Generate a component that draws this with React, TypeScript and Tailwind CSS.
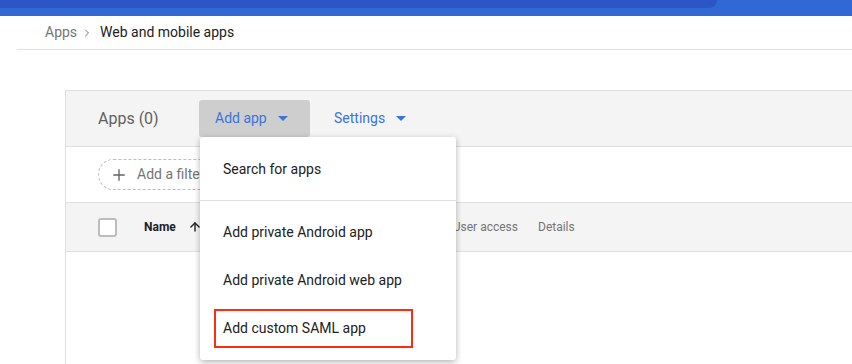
import { Plus, ChevronRight, ArrowUp } from "lucide-react";

const MENU_ITEMS = ["Add private Android app", "Add private Android web app"];

function Caret() {
  return (
    <svg width="10" height="5" viewBox="0 0 10 5" className="ml-[11px]">
      <path d="M0 0h10L5 5z" fill="#3b74db" />
    </svg>
  );
}

export default function App() {
  return (
    <div className="h-[364px] w-[852px] overflow-hidden bg-white font-['Roboto',sans-serif]">
      {/* top bar */}
      <div className="h-4 bg-[#3268d6]">
        <div className="h-2 w-[717px] rounded-br-lg bg-[#2b57c6]" />
      </div>

      {/* breadcrumb */}
      <div className="ml-[17px] flex h-[34px] items-center border-b border-[#e0e0e0] pl-[28px] text-[14px]">
        <span className="text-[#757575]">Apps</span>
        <ChevronRight size={12} className="ml-[4px] mr-[7px] text-[#757575]" strokeWidth={2} />
        <span className="text-[#202124]">Web and mobile apps</span>
      </div>

      {/* panel */}
      <div className="relative ml-[65px] mt-[40px] h-[300px] border-l border-t border-[#e0e0e0]">
        <div className="flex h-[56px] items-center border-b border-[#e0e0e0] bg-[#f4f4f4] pl-[32px]">
          <span className="w-[101px] text-[16px] text-[#616161]">Apps (0)</span>
          <button
            type="button"
            className="flex h-[37px] w-[111px] items-center rounded-[3px] bg-[#cecece] pl-[16px] text-[14px] text-[#3b74db]"
          >
            Add app
            <Caret />
          </button>
          <span className="ml-[24px] flex items-center text-[14px] text-[#3b74db]">
            Settings
            <Caret />
          </span>
        </div>

        <div className="flex h-[56px] items-center border-b border-[#e0e0e0] pl-[32px]">
          <div className="flex h-[31px] w-[170px] items-center rounded-full border border-dashed border-[#bdbdbd] pl-[11px] text-[14px] text-[#757575]">
            <Plus size={18} strokeWidth={1.8} className="text-[#616161]" />
            <span className="ml-[9px]">Add a filter</span>
          </div>
        </div>

        <div className="flex h-[49px] items-center border-b border-[#e0e0e0] bg-[#f4f4f4] pl-[32px] text-[12px]">
          <div className="h-[19px] w-[19px] rounded-[3px] border-2 border-[#bdbdbd] bg-white" />
          <span className="ml-[27px] font-bold text-[#202124]">Name</span>
          <ArrowUp size={14} strokeWidth={2.4} className="ml-[12px] text-[#202124]" />
          <span className="ml-[251px] text-[#757575]">User access</span>
          <span className="ml-[20px] text-[#757575]">Details</span>
        </div>

        {/* dropdown menu */}
        <div className="absolute left-[134px] top-[46px] w-[256px] rounded-[3px] bg-white py-2 text-[14px] text-[#212121] shadow-[0_2px_6px_rgba(0,0,0,0.3)]">
          <div className="flex h-12 items-center pl-[23px]">Search for apps</div>
          <div className="my-[7px] h-px bg-[#e0e0e0]" />
          {MENU_ITEMS.map((label) => (
            <div key={label} className="flex h-12 items-center pl-[23px]">
              {label}
            </div>
          ))}
          <div className="flex h-12 items-center pl-[14px]">
            <span className="flex h-[39px] w-[199px] items-center border-2 border-[#ff2d10] pl-[7px]">
              Add custom SAML app
            </span>
          </div>
        </div>
      </div>
    </div>
  );
}
